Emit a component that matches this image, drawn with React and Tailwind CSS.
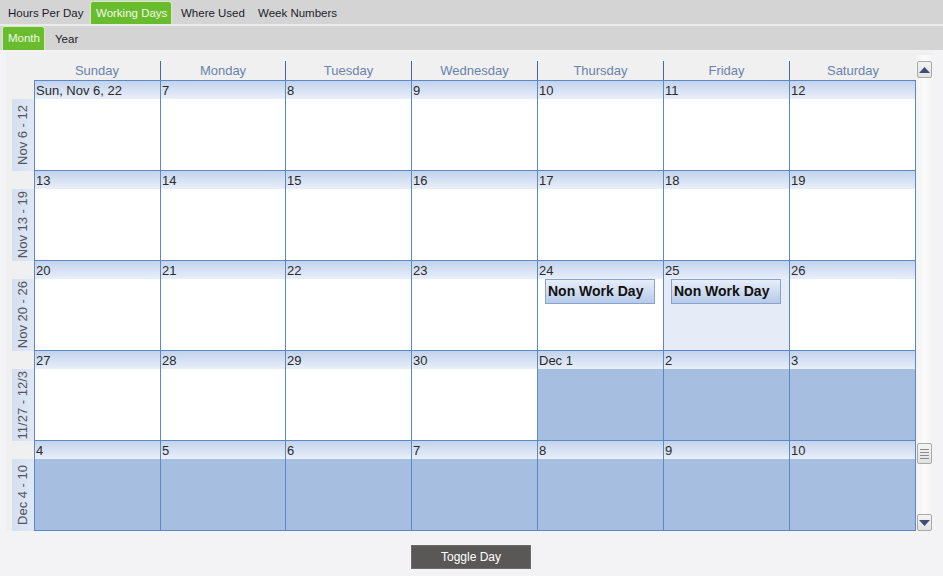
const days = ['Sunday', 'Monday', 'Tuesday', 'Wednesday', 'Thursday', 'Friday', 'Saturday'];

// body: w = white, s = shaded (non working), l = light (selected)
const weeks = [
  { label: 'Nov 6 - 12', dates: ['Sun, Nov 6, 22', '7', '8', '9', '10', '11', '12'], body: 'wwwwwww' },
  { label: 'Nov 13 - 19', dates: ['13', '14', '15', '16', '17', '18', '19'], body: 'wwwwwww' },
  { label: 'Nov 20 - 26', dates: ['20', '21', '22', '23', '24', '25', '26'], body: 'wwwwwlw', nonWork: [4, 5] },
  { label: '11/27 - 12/3', dates: ['27', '28', '29', '30', 'Dec 1', '2', '3'], body: 'wwwwsss' },
  { label: 'Dec 4 - 10', dates: ['4', '5', '6', '7', '8', '9', '10'], body: 'sssssss' },
];

const bodyBg = {
  w: 'bg-white',
  s: 'bg-[#a6bfe1]',
  l: 'bg-[#e5ecf7]',
};

function TopTabs() {
  return (
    <div className="text-[11.5px] text-[#1c1c2c]">
      <div className="h-[24px] bg-[#d4d4d4] flex items-end">
        <div className="w-[90px] pl-[8px] pb-[2px]">Hours Per Day</div>
        <div className="w-[82px] h-[23px] pl-[5px] pt-[3px] bg-[#69bc2d] border border-b-0 border-[#d3ecb9] rounded-t-[3px] text-[#f2f9e8]">
          Working Days
        </div>
        <div className="w-[86px] pl-[9px] pb-[2px]">Where Used</div>
        <div className="pb-[2px]">Week Numbers</div>
      </div>
      <div className="h-[2px] bg-[#ebebeb]" />
      <div className="h-[24px] bg-[#d4d4d4] flex items-end">
        <div className="ml-[2px] w-[43px] h-[24px] pl-[5px] pt-[3px] bg-[#69bc2d] border border-b-0 border-[#d3ecb9] rounded-t-[3px] text-[#f2f9e8]">
          Month
        </div>
        <div className="ml-[10px] pb-[2px]">Year</div>
      </div>
    </div>
  );
}

function Arrow({ up }) {
  return (
    <svg width="11" height="6" viewBox="0 0 11 6">
      {up ? <polygon points="0,6 11,6 5.5,0" fill="#3f4d74" /> : <polygon points="0,0 11,0 5.5,6" fill="#3f4d74" />}
    </svg>
  );
}

function ScrollBar() {
  return (
    <div className="w-[17px] flex flex-col pt-[3px]">
      <div className="flex-1 bg-gradient-to-r from-[#f3f3f3] via-[#fbfbfb] to-[#f3f3f3] flex flex-col pl-[1px] pr-[1px] pt-[6px]">
        <div className="w-[15px] h-[17px] border border-[#a9a9a9] rounded-[2px] bg-gradient-to-b from-[#f4f4f4] to-[#e2e2e2] flex items-center justify-center">
          <Arrow up />
        </div>
        <div className="h-[365px]" />
        <div className="w-[15px] h-[21px] border border-[#a9a9a9] rounded-[2px] bg-gradient-to-b from-[#f4f4f4] to-[#e2e2e2] flex flex-col items-center justify-center gap-[2px]">
          <div className="w-[9px] h-[1px] bg-[#8a8a8a]" />
          <div className="w-[9px] h-[1px] bg-[#8a8a8a]" />
          <div className="w-[9px] h-[1px] bg-[#8a8a8a]" />
          <div className="w-[9px] h-[1px] bg-[#8a8a8a]" />
        </div>
        <div className="h-[50px]" />
        <div className="w-[15px] h-[17px] border border-[#a9a9a9] rounded-[2px] bg-gradient-to-b from-[#f4f4f4] to-[#e2e2e2] flex items-center justify-center">
          <Arrow />
        </div>
      </div>
    </div>
  );
}

function Calendar() {
  return (
    <div className="ml-[6px] mt-[2px] w-[927px] h-[479px] bg-[#f0f0f0] flex">
      <div className="pl-[6px] pt-[9px]">
        <div className="flex">
          <div className="w-[22px]" />
          <div className="grid grid-cols-[126px_125px_126px_126px_126px_126px_127px] h-[19px] w-[882px] text-[13px] text-[#6a82ad]">
            {days.map((d, i) => (
              <div key={d} className={`text-center leading-[20px] ${i > 0 ? 'border-l border-[#4369a6]' : ''}`}>
                {d}
              </div>
            ))}
          </div>
        </div>
        <div className="flex">
          <div className="w-[22px] pt-[1px] flex flex-col">
            {weeks.map((w) => (
              <div key={w.label} className="h-[90px] flex flex-col">
                <div className="h-[18px]" />
                <div className="h-[72px] bg-gradient-to-r from-[#d4dff1] to-[#e0e8f5] flex items-center justify-center">
                  <span className="[writing-mode:vertical-rl] rotate-180 text-[13px] text-[#55555c] leading-[22px] whitespace-nowrap">
                    {w.label}
                  </span>
                </div>
              </div>
            ))}
          </div>
          <div className="w-[882px] border-l border-t border-[#5b88cb] grid grid-cols-[126px_125px_126px_126px_126px_126px_126px]">
            {weeks.map((w) =>
              w.dates.map((d, i) => (
                <div key={w.label + i} className="h-[90px] border-r border-b border-[#5b88cb] flex flex-col">
                  <div className="h-[18px] bg-gradient-to-b from-[#c3d3ec] to-[#e9eff9] text-[13px] leading-[19px] text-[#2a2a2a] pl-[1px]">
                    {d}
                  </div>
                  <div className={`flex-1 ${bodyBg[w.body[i]]}`}>
                    {w.nonWork && w.nonWork.includes(i) && (
                      <div className="ml-[7px] w-[110px] h-[25px] border border-[#86a4d2] bg-gradient-to-b from-[#e8eef9] to-[#b7cae7] text-[14px] font-bold text-[#111] leading-[23px] pl-[2px]">
                        Non Work Day
                      </div>
                    )}
                  </div>
                </div>
              ))
            )}
          </div>
        </div>
      </div>
      <ScrollBar />
    </div>
  );
}

export default function App() {
  return (
    <div className="w-[943px] h-[576px] bg-[#f3f3f5] overflow-hidden" style={{ fontFamily: '"Liberation Sans", Arial, sans-serif' }}>
      <TopTabs />
      <Calendar />
      <div className="pl-[411px] mt-[13px]">
        <button className="w-[120px] h-[24px] bg-[#5a5856] border border-[#6e6c6a] text-white text-[12px]">Toggle Day</button>
      </div>
    </div>
  );
}
